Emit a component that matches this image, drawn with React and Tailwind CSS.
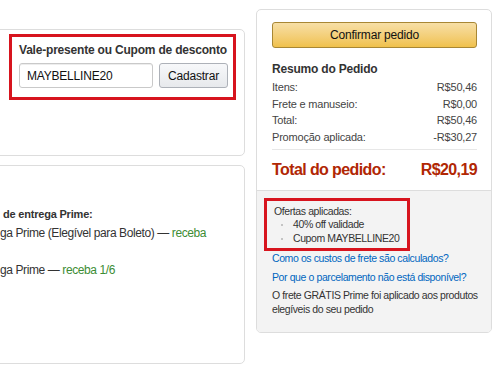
import React from "react";

function SummaryRow({ label, value }) {
  return (
    <div className="flex justify-between leading-[16.5px] text-[11px] text-[#444] tracking-[-0.2px]">
      <span>{label}</span>
      <span>{value}</span>
    </div>
  );
}

function Bullet({ children, className = "" }) {
  return (
    <li className={`flex items-center ${className}`}>
      <span className="w-[19px] pl-[7px] flex">
        <span className="w-[2px] h-[2px] rounded-full bg-[#b5b5b5]" />
      </span>
      <span>{children}</span>
    </li>
  );
}

export default function App() {
  return (
    <div className="w-[500px] h-[377px] overflow-hidden bg-white font-['Liberation_Sans',Arial,sans-serif] text-[#111]">
      <div className="flex gap-[11px]">
        {/* Left column */}
        <div className="w-[256px] -ml-[11px] mt-[29px] flex flex-col gap-[9px]">
          {/* Coupon card */}
          <div className="h-[127px] border border-[#ddd] rounded-[5px] pt-[4px] pl-[19px]">
            <div className="w-[227px] border-[3px] border-[#d7141e] pt-[5px] pb-[9px] pl-[7px]">
              <p className="text-[12px] leading-[16px] font-bold text-[#333] tracking-[-0.2px]">
                Vale-presente ou Cupom de desconto
              </p>
              <div className="mt-[5px] flex gap-[6px]">
                <div className="w-[134px] h-[25px] border border-[#c9c9c9] rounded-[3px] shadow-[inset_0_1px_0_rgba(0,0,0,0.07)] pl-[7px] flex items-center text-[12px] text-[#111] tracking-[-0.2px]">
                  MAYBELLINE20
                </div>
                <button className="w-[69px] h-[25px] border border-[#adb1b8] rounded-[3px] bg-linear-to-b from-[#f7f8fa] to-[#e7e9ec] text-[12px] text-[#111] tracking-[-0.2px]">
                  Cadastrar
                </button>
              </div>
            </div>
          </div>

          {/* Delivery card */}
          <div className="h-[199px] border border-[#ddd] rounded-[5px] pt-[40px]">
            <p className="ml-[13px] text-[11px] leading-[16px] font-bold text-[#333] tracking-[-0.2px]">
              de entrega Prime:
            </p>
            <p className="ml-[10px] mt-[3px] text-[12px] leading-[16px] text-[#333] tracking-[-0.4px]">
              ga Prime (Elegível para Boleto) —{" "}
              <span className="text-[#3d8d34]">receba</span>
            </p>
            <p className="ml-[10px] mt-[21px] text-[12px] leading-[16px] text-[#333] tracking-[-0.4px]">
              ga Prime — <span className="text-[#3d8d34]">receba 1/6</span>
            </p>
          </div>
        </div>

        {/* Right column */}
        <div className="w-[236px] mt-[9px] h-[324px] border border-[#ddd] rounded-[5px] overflow-hidden flex flex-col">
          <div className="pt-[12px] pl-[15px] pr-[14px] pb-[9px]">
            <button className="w-full h-[26px] border border-[#a88734] rounded-[3px] bg-linear-to-b from-[#f7dfa5] to-[#f0c14b] text-[12px] text-[#111] tracking-[-0.2px]">
              Confirmar pedido
            </button>
            <p className="mt-[13px] text-[12px] leading-[16px] font-bold text-[#333] tracking-[-0.2px]">
              Resumo do Pedido
            </p>
            <div className="mt-[2px]">
              <SummaryRow label="Itens:" value="R$50,46" />
              <SummaryRow label="Frete e manuseio:" value="R$0,00" />
              <SummaryRow label="Total:" value="R$50,46" />
              <SummaryRow label="Promoção aplicada:" value="-R$30,27" />
            </div>
            <div className="mt-[4px] h-px bg-[#e7e7e7]" />
            <div className="mt-[9px] flex justify-between text-[16px] leading-[22px] font-bold text-[#b12704] tracking-[-0.6px]">
              <span>Total do pedido:</span>
              <span>R$20,19</span>
            </div>
          </div>
          <div className="flex-1 border-t border-[#ddd] bg-[#f3f3f3] pt-[7px] pl-[15px] pr-[6px] text-[10.5px] tracking-[-0.4px]">
            <div className="w-[146px] -ml-[8px] border-[3px] border-[#d7141e] pt-[4px] pb-[3px] pl-[7px] text-[#333] leading-[13px]">
              <p>Ofertas aplicadas:</p>
              <ul>
                <Bullet>40% off validade</Bullet>
                <Bullet className="mt-[1px]">Cupom MAYBELLINE20</Bullet>
              </ul>
            </div>
            <p className="leading-[14px] text-[#0066c0]">
              Como os custos de frete são calculados?
            </p>
            <p className="mt-[5px] leading-[14px] text-[#0066c0]">
              Por que o parcelamento não está disponível?
            </p>
            <p className="mt-[4px] leading-[14px] text-[#333]">
              O frete GRÁTIS Prime foi aplicado aos produtos elegíveis do seu
              pedido
            </p>
          </div>
        </div>
      </div>
    </div>
  );
}
